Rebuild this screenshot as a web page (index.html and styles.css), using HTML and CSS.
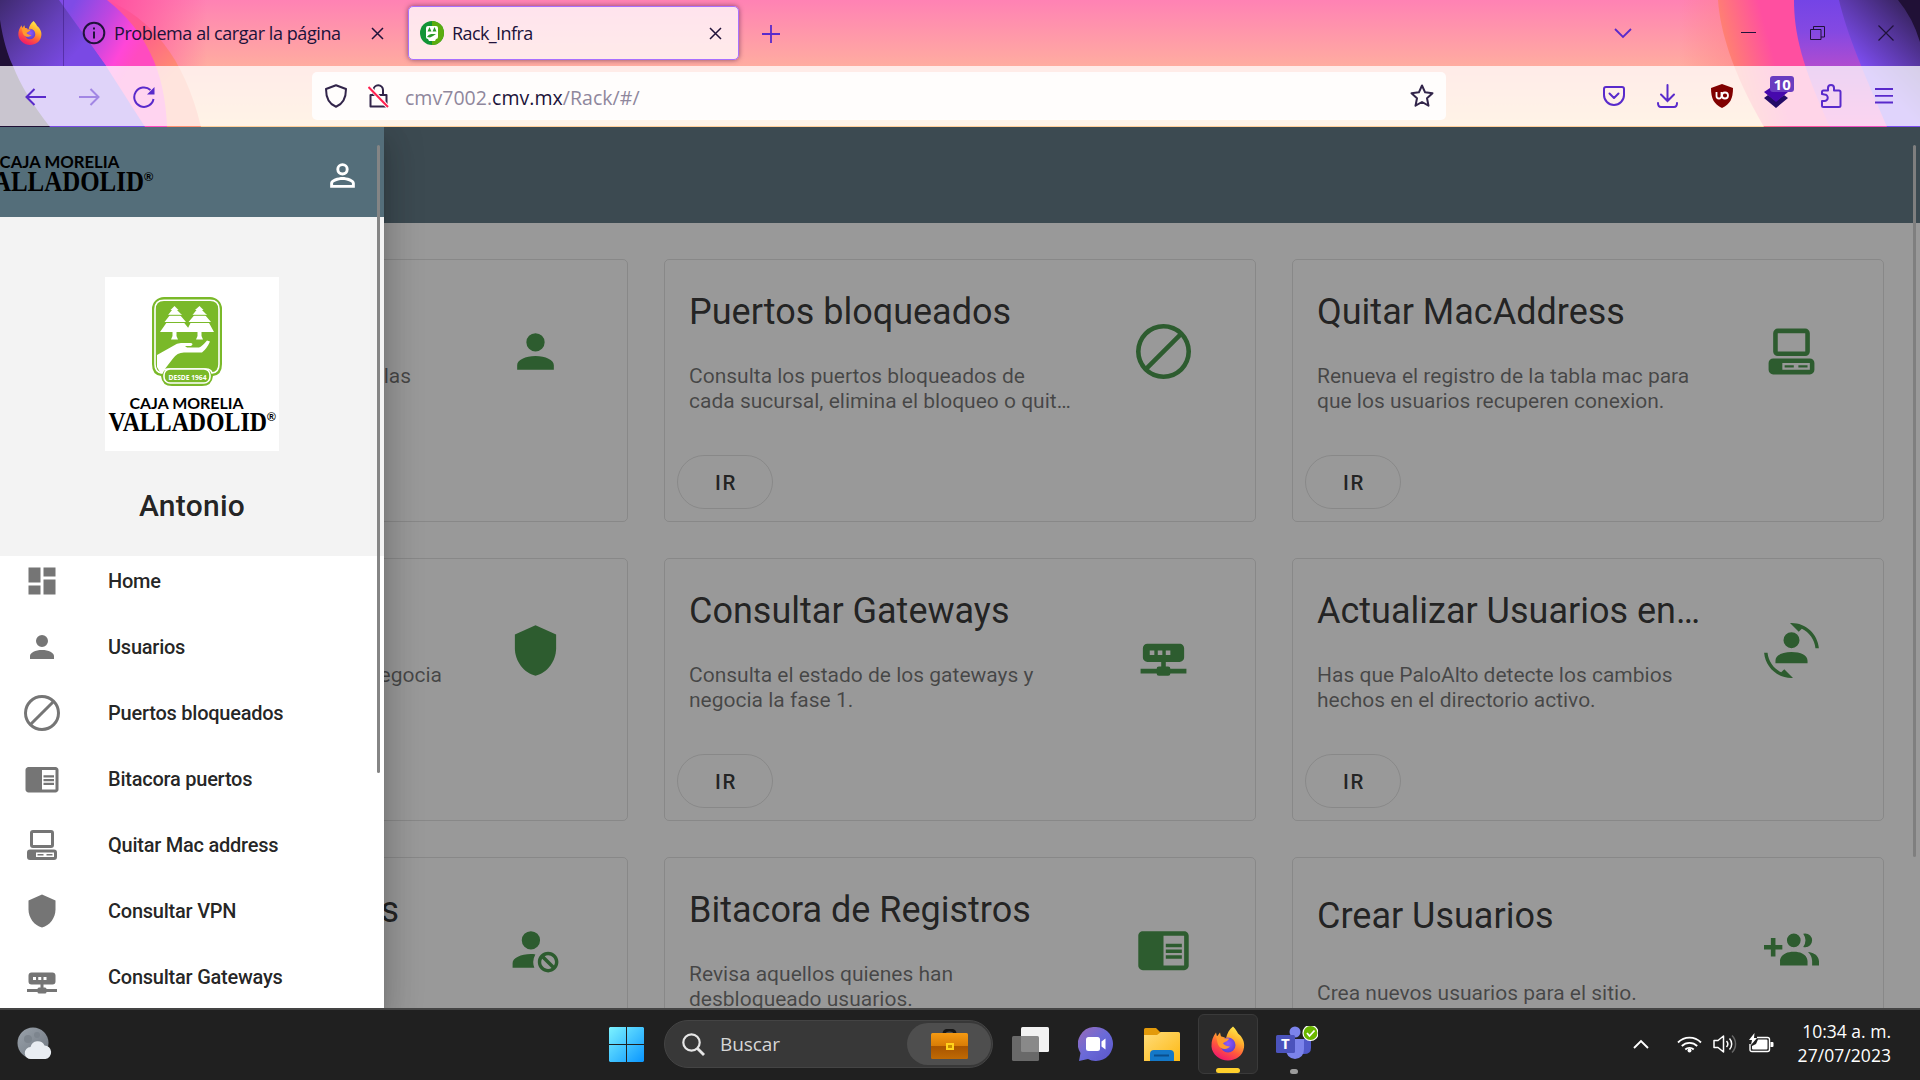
FILE: index.html
```
<!DOCTYPE html>
<html lang="es">
<head>
<meta charset="utf-8">
<title>Rack_Infra</title>
<link rel="stylesheet" href="styles.css">
</head>
<body>
<svg class="defs" width="0" height="0" aria-hidden="true">
  <defs>
    <linearGradient id="ff-body" x1=".8" y1="0" x2=".3" y2="1"><stop offset="0" stop-color="#fff14f"/><stop offset=".35" stop-color="#ffb02e"/><stop offset=".65" stop-color="#ff5a3c"/><stop offset="1" stop-color="#f0146e"/></linearGradient>
    <radialGradient id="ff-core" cx=".5" cy=".4" r=".6"><stop offset="0" stop-color="#9059ff"/><stop offset="1" stop-color="#5b3fd0"/></radialGradient>
    <linearGradient id="win" x1="0" y1="0" x2="1" y2="1"><stop offset="0" stop-color="#7df3ff"/><stop offset="1" stop-color="#0a96ff"/></linearGradient>
    <linearGradient id="case" x1="0" y1="0" x2="0" y2="1"><stop offset="0" stop-color="#f59a12"/><stop offset=".5" stop-color="#d87c06"/><stop offset=".52" stop-color="#a85400"/><stop offset="1" stop-color="#c06a04"/></linearGradient>
    <linearGradient id="folder" x1="0" y1="0" x2="1" y2="1"><stop offset="0" stop-color="#ffdc7a"/><stop offset="1" stop-color="#fdb913"/></linearGradient>
    <linearGradient id="chat" x1="0" y1="0" x2="1" y2="1"><stop offset="0" stop-color="#9a6bb8"/><stop offset=".5" stop-color="#6a6ad8"/><stop offset="1" stop-color="#5a55c8"/></linearGradient>
    <linearGradient id="moon" x1="0" y1="0" x2="1" y2="1"><stop offset="0" stop-color="#9aa2ab"/><stop offset="1" stop-color="#6f7780"/></linearGradient>
  </defs>
  <symbol id="i-firefox" viewBox="0 0 34 34">
    <path fill="url(#ff-body)" d="M22 0c3 3 4 5 5 7 4 3 7 8 6 14-1 8-8 13-16 13S1 28 .5 20C.3 14 2 10 5 6l1 4 3-4 1 4c2 0 4 1 5 2 1-5 3-9 7-12z"/>
    <circle cx="17" cy="18.500" r="7.500" fill="url(#ff-core)"/>
    <path fill="#ff9a2e" d="M5 10c3-1 6 0 8 2h5c-1 3-4 3-6 5 2 2 4 3 7 3-3 4-10 3-12-2-1-3-1-5-2-8z"/>
  </symbol>
  <symbol id="i-dashboard" viewBox="0 0 24 24"><path d="M13 3v6h8V3m-8 18h8V11h-8M3 21h8v-6H3m0-2h8V3H3z"/></symbol>
  <symbol id="i-account" viewBox="0 0 24 24"><path d="M12 4a4 4 0 0 1 4 4 4 4 0 0 1-4 4 4 4 0 0 1-4-4 4 4 0 0 1 4-4m0 10c4.420 0 8 1.790 8 4v2H4v-2c0-2.210 3.580-4 8-4z"/></symbol>
  <symbol id="i-account-outline" viewBox="0 0 24 24"><path d="M12 4A4 4 0 0 1 16 8A4 4 0 0 1 12 12A4 4 0 0 1 8 8A4 4 0 0 1 12 4M12 5.900A2.100 2.100 0 0 0 9.900 8A2.100 2.100 0 0 0 12 10.100A2.100 2.100 0 0 0 14.100 8A2.100 2.100 0 0 0 12 5.900M12 13C14.670 13 20 14.330 20 17V20H4V17C4 14.330 9.330 13 12 13M12 14.900C9.030 14.900 5.900 16.360 5.900 17V18.100H18.100V17C18.100 16.360 14.970 14.900 12 14.900Z"/></symbol>
  <symbol id="i-block" viewBox="0 0 24 24"><path d="M12 0A12 12 0 0 1 24 12A12 12 0 0 1 12 24A12 12 0 0 1 0 12A12 12 0 0 1 12 0M12 2A10 10 0 0 0 2 12C2 14.400 2.850 16.600 4.260 18.330L18.330 4.260C16.600 2.850 14.400 2 12 2M12 22A10 10 0 0 0 22 12C22 9.600 21.150 7.400 19.740 5.670L5.670 19.740C7.400 21.150 9.600 22 12 22Z"/></symbol>
  <symbol id="i-reader" viewBox="0 0 24 24"><path d="M13 12h7v1.500h-7zm0-2.500h7V11h-7zm0 5h7V16h-7zM21 4H3c-1.100 0-2 .9-2 2v13c0 1.100.9 2 2 2h18c1.100 0 2-.9 2-2V6c0-1.100-.9-2-2-2zm0 15h-9V6h9v13z"/></symbol>
  <symbol id="i-desktop" viewBox="0 0 24 24"><path fill-rule="evenodd" d="M6 2h12a2 2 0 0 1 2 2v8a2 2 0 0 1-2 2H6a2 2 0 0 1-2-2V4a2 2 0 0 1 2-2zm0 2v8h12V4zM4 15h16a2 2 0 0 1 2 2v3a2 2 0 0 1-2 2H4a2 2 0 0 1-2-2v-3a2 2 0 0 1 2-2zm4 2v3h12v-3zm1 1h4v1H9zm6 0h4v1h-4z"/></symbol>
  <symbol id="i-shield" viewBox="0 0 24 24"><path d="M12 1L3 5V11C3 16.550 6.840 21.740 12 23C17.160 21.740 21 16.550 21 11V5L12 1Z"/></symbol>
  <symbol id="i-router" viewBox="0 0 24 24"><path fill-rule="evenodd" d="M5 9C3.890 9 3 9.890 3 11V15A2 2 0 0 0 5 17H11V19H10A1 1 0 0 0 9 20H2V22H9A1 1 0 0 0 10 23H14A1 1 0 0 0 15 22H22V20H15A1 1 0 0 0 14 19H13V17H19A2 2 0 0 0 21 15V11C21 9.890 20.100 9 19 9H5M6 12H8V14H6V12M9.500 12H11.500V14H9.500V12M13 12H15V14H13V12Z"/></symbol>
  <symbol id="i-convert" viewBox="0 0 24 24"><path d="M7.500 21.500L8.850 20.160L12.660 23.970L12 24C5.710 24 .56 19.160 .05 13H1.550C1.910 16.760 4.250 19.940 7.500 21.500M16.500 2.500L15.150 3.840L11.340 .03L12 0C18.290 0 23.440 4.840 23.950 11H22.450C22.090 7.240 19.750 4.070 16.500 2.500M5 17.600V16.500C5 14 8 12.700 12 12.700S19 14 19 16.500V17.600ZM15.500 7.500A3.500 3.500 0 0 1 12 11A3.500 3.500 0 0 1 8.500 7.500A3.500 3.500 0 0 1 12 4A3.500 3.500 0 0 1 15.500 7.500Z"/></symbol>
  <symbol id="i-account-cancel" viewBox="0 0 24 24"><path d="M10 4A4 4 0 0 0 6 8A4 4 0 0 0 10 12A4 4 0 0 0 14 8A4 4 0 0 0 10 4M17.500 13C15 13 13 15 13 17.500C13 20 15 22 17.500 22C20 22 22 20 22 17.500C22 15 20 13 17.500 13M10 14C5.580 14 2 15.790 2 18V20H11.500A6.500 6.500 0 0 1 11 17.500A6.500 6.500 0 0 1 11.950 14.140C11.320 14.060 10.680 14 10 14M17.500 14.500C19.160 14.500 20.500 15.840 20.500 17.500C20.500 18.060 20.350 18.580 20.080 19L16 14.920C16.420 14.650 16.940 14.500 17.500 14.500M14.920 16L19 20.080C18.580 20.350 18.060 20.500 17.500 20.500C15.840 20.500 14.500 19.160 14.500 17.500C14.500 16.940 14.650 16.420 14.920 16Z"/></symbol>
  <symbol id="i-account-plus" viewBox="0 0 24 24"><path d="M19 17V19H7V17S7 13 13 13 19 17 19 17M16 8A3 3 0 1 0 13 11A3 3 0 0 0 16 8M19.200 13.060A5.600 5.600 0 0 1 21 17V19H24V17S24 13.550 19.200 13.060M18 5A2.910 2.910 0 0 0 17.110 5.140A5 5 0 0 1 17.110 10.860A2.910 2.910 0 0 0 18 11A3 3 0 0 0 18 5M8 10H5V7H3V10H0V12H3V15H5V12H8Z"/></symbol>
</svg>

<div class="screen">
  <header class="browser">
    <svg class="theme" viewBox="0 0 1920 127" width="1920" height="127" aria-hidden="true">
      <defs>
        <linearGradient id="t-bg" x1="0" y1="0" x2="0" y2="1"><stop offset="0" stop-color="#ff82b4"/><stop offset=".52" stop-color="#ffaca0"/><stop offset="1" stop-color="#ffcf9a"/></linearGradient>
        <linearGradient id="t-glow" x1="0" x2="1"><stop offset="0" stop-color="#ff4f9f"/><stop offset="1" stop-color="#ff4f9f" stop-opacity="0"/></linearGradient>
        <linearGradient id="t-orange" gradientUnits="userSpaceOnUse" x1="120" y1="0" x2="185" y2="66"><stop offset="0" stop-color="#ff4f9f"/><stop offset=".4" stop-color="#ff5c8c"/><stop offset="1" stop-color="#ff9070"/></linearGradient>
        <linearGradient id="t-magenta" gradientUnits="userSpaceOnUse" x1="70" y1="10" x2="140" y2="50"><stop offset="0" stop-color="#7f4be6"/><stop offset=".45" stop-color="#c046e0"/><stop offset=".8" stop-color="#ff46d8"/><stop offset="1" stop-color="#ff4bc0"/></linearGradient>
        <linearGradient id="t-violet" gradientUnits="userSpaceOnUse" x1="0" y1="0" x2="70" y2="60"><stop offset="0" stop-color="#3f2a70"/><stop offset=".6" stop-color="#6540ba"/><stop offset="1" stop-color="#7a49e4"/></linearGradient>
        <linearGradient id="t-pink2" gradientUnits="userSpaceOnUse" x1="1725" y1="40" x2="1780" y2="25"><stop offset="0" stop-color="#ff8072"/><stop offset=".75" stop-color="#ff4fa0"/></linearGradient>
        <linearGradient id="t-purple2" x1="0" y1="0" x2="0" y2="1"><stop offset="0" stop-color="#7444e6"/><stop offset=".25" stop-color="#8449e2"/><stop offset=".55" stop-color="#b44cce"/><stop offset="1" stop-color="#f04cc0"/></linearGradient>
        <linearGradient id="t-violet2" gradientUnits="userSpaceOnUse" x1="1855" y1="60" x2="1905" y2="10"><stop offset="0" stop-color="#7d4df0"/><stop offset="1" stop-color="#3c2668"/></linearGradient>
        <linearGradient id="t-og" x1="0" x2="1"><stop offset="0" stop-color="#ff7f7a" stop-opacity="0"/><stop offset="1" stop-color="#ff7f8a" stop-opacity=".55"/></linearGradient>
      </defs>
      <rect width="1920" height="127" fill="url(#t-bg)"/>
      <rect x="107" width="100" height="66" fill="url(#t-glow)"/>
      <path fill="url(#t-orange)" d="M107 0C150 18 184 56 201 127H0V0z"/>
      <path fill="url(#t-magenta)" d="M107 0C145 30 165 70 167 127H0V0z"/>
      <path fill="#7a49e4" d="M59 0L106 66 145 127H0V0z"/>
      <path fill="url(#t-violet)" d="M0 0H59L106 66H0z"/>
      <path fill="#201036" d="M0 20C3 40 8 56 13 66 20 84 32 104 50 127H0z"/>
      <rect x="1680" width="60" height="66" fill="url(#t-og)"/>
      <path fill="url(#t-pink2)" d="M1718 0C1720 30 1732 72 1764 127H1920V0z"/>
      <path fill="url(#t-purple2)" d="M1794 0C1794 34 1802 66 1830 127H1920V0z"/>
      <path fill="url(#t-violet2)" d="M1839 0C1846 30 1858 60 1887 127H1920V0z"/>
      <path fill="#201036" d="M1898 0Q1913 18 1920 42V0z"/>
    </svg>

    <div class="tabs">
      <svg class="tab-firefox" width="24" height="24"><use href="#i-firefox"/></svg>
      <div class="tab tab-error">
        <svg width="24" height="24" viewBox="0 0 24 24" fill="none" stroke="#20123a" stroke-width="2"><circle cx="12" cy="12" r="10.300"/><path d="M12 10.500v7M12 6.500v2"/></svg>
        <span class="tab-title tab-title-error">Problema al cargar la página</span>
        <svg class="tab-close" width="13" height="13" viewBox="0 0 13 13" stroke="#20123a" stroke-width="1.500"><path d="M1 1l11 11M12 1L1 12"/></svg>
      </div>
      <div class="tab tab-active">
        <svg width="24" height="24" viewBox="0 0 24 24"><circle cx="12" cy="12" r="12" fill="#129436"/><path d="M12 0a12 12 0 0 1 0 24z" fill="#5bac10"/><path d="M8 5h8q2 0 2 2v9q0 2-2 2l-1 2H9l-1-2q-2 0-2-2V7q0-2 2-2z" fill="#fff"/><path d="M9.500 6l-2 4.500h4zM14.500 6l-2 4.500h4zM7 16c2-3 4-3 5-3h4l-3 2-3 1.500z" fill="#2b9a2a"/></svg>
        <span class="tab-title tab-title-active">Rack_Infra</span>
        <svg class="tab-close" width="13" height="13" viewBox="0 0 13 13" stroke="#20123a" stroke-width="1.500"><path d="M1 1l11 11M12 1L1 12"/></svg>
      </div>
      <svg class="tab-new" width="18" height="18" viewBox="0 0 18 18" stroke="#592acb" stroke-width="1.800"><path d="M9 0v18M0 9h18"/></svg>
      <div class="window-controls">
        <svg width="18" height="11" viewBox="0 0 18 11" fill="none" stroke="#592acb" stroke-width="1.800"><path d="M1 1l8 8 8-8"/></svg>
        <svg class="wc-min" width="15" height="14" viewBox="0 0 15 14" stroke="#20123a"><path d="M0 6.500h15"/></svg>
        <svg class="wc-max" width="15" height="14" viewBox="0 0 15 14" fill="none" stroke="#20123a"><path d="M.5 3.500h10.500v10H.5zM3.500 3.500v-3h11v10.500H11"/></svg>
        <svg class="wc-close" width="16" height="16" viewBox="0 0 16 16" stroke="#20123a" stroke-width="1.200"><path d="M.5 .5l15 15M15.500 .5l-15 15"/></svg>
      </div>
    </div>

    <div class="toolbar">
      <div class="nav-buttons">
        <svg width="21" height="18" viewBox="0 0 21 18" fill="none" stroke="#592acb" stroke-width="2"><path d="M21 9H1.500M9.500 1L1.500 9l8 8"/></svg>
        <svg class="forward" width="21" height="18" viewBox="0 0 21 18" fill="none" stroke="#592acb" stroke-width="2"><path d="M0 9h19.500M11.500 1l8 8-8 8"/></svg>
        <svg width="22" height="22" viewBox="0 0 22 22" fill="none" stroke="#592acb" stroke-width="2"><path d="M20.500 13A9.700 9.700 0 1 1 17.500 4"/><path d="M21.500 1v7.500h-7.500z" fill="#592acb" stroke="none"/></svg>
      </div>
      <div class="urlbar">
        <svg width="22" height="24" viewBox="0 0 22 24" fill="none" stroke="#32254a" stroke-width="2" stroke-linejoin="round"><path d="M11 1.200L21 5C21 14 18 20 11 22.800 4 20 1 14 1 5z"/></svg>
        <svg class="lock" width="21" height="24" viewBox="0 0 21 24" fill="none" stroke="#32254a" stroke-width="2"><path d="M5.500 11V6a4.500 4.500 0 0 1 9.500 0v5M2.500 11h16v11.500h-16z" stroke-linejoin="round"/><path d="M1 3l19 20" stroke="#fffcfb" stroke-width="4"/><path d="M.5 3l19.500 20" stroke="#ff1f4f"/></svg>
        <span class="url">cmv7002.<b>cmv.mx</b>/Rack/#/</span>
        <svg class="star" width="24" height="24" viewBox="0 0 24 24" fill="none" stroke="#32254a" stroke-width="2" stroke-linejoin="round"><path d="M12 1.500l3.100 6.800 7.400.9-5.500 5 1.500 7.500L12 18l-6.500 3.700L7 14.200l-5.500-5 7.400-.9z"/></svg>
      </div>
      <div class="ext">
        <svg width="22" height="20" viewBox="0 0 22 20" fill="none" stroke="#592acb" stroke-width="2" stroke-linecap="round" stroke-linejoin="round"><path d="M3 1h16q2 0 2 2v6a10 10 0 0 1-20 0V3q0-2 2-2zM6.500 7.500L11 12l4.500-4.500"/></svg>
        <svg width="21" height="24" viewBox="0 0 21 24" fill="none" stroke="#592acb" stroke-width="2" stroke-linecap="round"><path d="M10.500 1v16M4 10.500l6.500 6.500 6.500-6.500M1 19q0 4 3 4h13q3 0 3-4"/></svg>
        <svg width="22" height="24" viewBox="0 0 22 24"><path fill="#800000" d="M11 0l11 4c0 11-3 16-11 20C3 20 0 15 0 4z"/><path d="M5.500 8v4a2.500 2.500 0 0 0 5 0V8" fill="none" stroke="#fff" stroke-width="1.800"/><circle cx="14" cy="11.500" r="3" fill="none" stroke="#fff" stroke-width="1.800"/></svg>
        <div class="wappalyzer">
          <svg width="24" height="24" viewBox="0 0 24 24"><path fill="#230b66" d="M0 14l4-3 8 6 8-6 4 3-12 10z"/><path fill="#4608ad" d="M0 8l12-8 12 8-12 10z"/></svg>
          <span class="badge">10</span>
        </div>
        <svg class="puzzle" width="21" height="24" viewBox="0 0 21 24" fill="none" stroke="#592acb" stroke-width="2" stroke-linejoin="round"><path d="M1 10V8q0-1.500 1.500-1.500h4.500V4a3 3 0 0 1 6 0v2.500h5q1.500 0 1.500 1.500v13.500q0 1.500-1.500 1.500h-15.500q-1.500 0-1.500-1.500v-4.500h2.500a3 3 0 0 0 0-6.500z"/></svg>
        <svg width="18" height="16" viewBox="0 0 18 16" stroke="#592acb" stroke-width="1.800"><path d="M0 1h18M0 7.800h18M0 14.500h18"/></svg>
      </div>
    </div>
  </header>

  <main class="page">
    <div class="app-bar"></div>
    <div class="cards">
      <article class="card">
        <div class="card-body"><div class="card-text partial-a"><h2>Usuarios</h2><p>las</p></div><svg class="card-icon"><use href="#i-account"/></svg></div>
        <button class="go">IR</button>
      </article>
      <article class="card">
        <div class="card-body"><div class="card-text"><h2>Puertos bloqueados</h2><p>Consulta los puertos bloqueados de<br>cada sucursal, elimina el bloqueo o quit…</p></div><svg class="card-icon"><use href="#i-block"/></svg></div>
        <button class="go">IR</button>
      </article>
      <article class="card">
        <div class="card-body"><div class="card-text"><h2>Quitar MacAddress</h2><p>Renueva el registro de la tabla mac para<br>que los usuarios recuperen conexion.</p></div><svg class="card-icon"><use href="#i-desktop"/></svg></div>
        <button class="go">IR</button>
      </article>
      <article class="card">
        <div class="card-body"><div class="card-text partial-b"><h2>Consultar VPN</h2><p>negocia</p></div><svg class="card-icon"><use href="#i-shield"/></svg></div>
        <button class="go">IR</button>
      </article>
      <article class="card">
        <div class="card-body"><div class="card-text"><h2>Consultar Gateways</h2><p>Consulta el estado de los gateways y<br>negocia la fase 1.</p></div><svg class="card-icon"><use href="#i-router"/></svg></div>
        <button class="go">IR</button>
      </article>
      <article class="card">
        <div class="card-body"><div class="card-text"><h2>Actualizar Usuarios en…</h2><p>Has que PaloAlto detecte los cambios<br>hechos en el directorio activo.</p></div><svg class="card-icon"><use href="#i-convert"/></svg></div>
        <button class="go">IR</button>
      </article>
      <article class="card">
        <div class="card-body"><div class="card-text partial-c"><h2>Usuarios</h2></div><svg class="card-icon"><use href="#i-account-cancel"/></svg></div>
        <button class="go">IR</button>
      </article>
      <article class="card">
        <div class="card-body"><div class="card-text"><h2>Bitacora de Registros</h2><p>Revisa aquellos quienes han<br>desbloqueado usuarios.</p></div><svg class="card-icon"><use href="#i-reader"/></svg></div>
        <button class="go">IR</button>
      </article>
      <article class="card">
        <div class="card-body"><div class="card-text single"><h2>Crear Usuarios</h2><p>Crea nuevos usuarios para el sitio.</p></div><svg class="card-icon"><use href="#i-account-plus"/></svg></div>
        <button class="go">IR</button>
      </article>
    </div>
    <div class="page-thumb"></div>
    <div class="scrim"></div>

    <aside class="drawer">
      <div class="drawer-bar">
        <svg class="bar-wordmark" width="183" height="46" viewBox="0 0 174 44">
          <text class="wm-top" x="24" y="14.500" textLength="114.500" lengthAdjust="spacingAndGlyphs">CAJA MORELIA</text>
          <text class="wm-main" x="3.500" y="36.500" textLength="158.500" lengthAdjust="spacingAndGlyphs">VALLADOLID</text>
          <text class="wm-reg" x="162" y="26.500">®</text>
        </svg>
        <svg class="bar-user" width="37" height="37"><use href="#i-account-outline"/></svg>
      </div>
      <div class="profile">
        <div class="logo">
          <svg class="emblem" width="70" height="89" viewBox="0 0 70 89">
            <path fill="#7ab929" d="M12 0h46a12 12 0 0 1 12 12v55q0 11-9 12-1 10-11 10H20q-10 0-11-10-9-1-9-12V12A12 12 0 0 1 12 0z"/>
            <path fill="none" stroke="#fff" stroke-width="1.600" d="M12 3.200h46q9 0 9 9v55q0 8-7 8.800-1-4-6-4H16q-5 0-6 4-7-.8-7-8.800v-55q0-9 9-9z"/>
            <rect x="12" y="72" width="46" height="14" rx="6" fill="#7ab929" stroke="#fff" stroke-width="1.600"/>
            <path fill="#fff" d="M22.500 9l4 4h-1.500l5 5h-2l6 7h-2.500l8 10H24.500v4l1.500 3.500h-7l1.500-3.500v-4H8l7-10h-2.500l5.500-7h-2l4-5h-1.500z"/>
            <path fill="#fff" d="M47.500 9l4 4H50l5 5h-2l6 7h-2.500l5.500 10H49.500v4l1.500 3.500h-7l1.500-3.500v-4H34l5-10h-2.500l6-7h-2l4-5h-1.500z"/>
            <path stroke="#7ab929" d="M16 18.300h13M12 25.500h21M41 18.300h13M37 25.500h21"/>
            <path fill="#fff" d="M5 58l16-9q4-3 8-3h10q3 1 0 3h-6l2 1.500h12q3-1 8-7l3 1q-3 7-8 11H32q-7 0-11 6L9 77 5 70z"/>
            <text class="since" x="16.500" y="82.500" textLength="38" lengthAdjust="spacingAndGlyphs">DESDE 1964</text>
          </svg>
          <svg width="174" height="44" viewBox="0 0 174 44">
            <text class="wm-top" x="24.500" y="14.500" textLength="114" lengthAdjust="spacingAndGlyphs">CAJA MORELIA</text>
            <text class="wm-main" x="3.500" y="36.500" textLength="158.500" lengthAdjust="spacingAndGlyphs">VALLADOLID</text>
            <text class="wm-reg" x="162" y="26.500">®</text>
          </svg>
        </div>
        <div class="name">Antonio</div>
      </div>
      <nav class="menu">
        <a><svg><use href="#i-dashboard"/></svg>Home</a>
        <a><svg><use href="#i-account"/></svg>Usuarios</a>
        <a><svg><use href="#i-block"/></svg>Puertos bloqueados</a>
        <a><svg><use href="#i-reader"/></svg>Bitacora puertos</a>
        <a><svg><use href="#i-desktop"/></svg>Quitar Mac address</a>
        <a><svg><use href="#i-shield"/></svg>Consultar VPN</a>
        <a><svg><use href="#i-router"/></svg>Consultar Gateways</a>
      </nav>
      <div class="drawer-thumb"></div>
    </aside>
  </main>

  <footer class="taskbar">
    <svg class="weather" width="36" height="34" viewBox="0 0 36 34"><circle cx="16" cy="16" r="15.500" fill="url(#moon)"/><circle cx="11" cy="12" r="4" fill="#7d858e"/><circle cx="20" cy="8" r="3" fill="#7d858e"/><path fill="#e9edf2" d="M14 32a6 6 0 0 1-.5-12 7.500 7.500 0 0 1 14-1.500A6.800 6.800 0 0 1 28.500 32z"/></svg>
    <div class="apps">
      <svg width="35" height="35" viewBox="0 0 35 35"><path fill="url(#win)" d="M1 0h16v17H0V1zM18 0h16l1 1v16H18zM0 18h17v17H1l-1-1zM18 18h17v16l-1 1H18z"/></svg>
      <div class="search">
        <svg width="23" height="23" viewBox="0 0 23 23" fill="none" stroke="#e6e6e6"><circle cx="9.500" cy="9.500" r="8.200" stroke-width="2.200"/><path d="M15.500 15.500l6.500 6.500" stroke-width="2.800"/></svg>
        <span>Buscar</span>
        <div class="highlight"><svg width="37" height="30" viewBox="0 0 37 30"><path d="M13 5q0-4 5.500-4T24 5" fill="none" stroke="#161616" stroke-width="3"/><rect y="4" width="37" height="26" rx="1.500" fill="url(#case)"/><rect x="15" y="14" width="8" height="7" fill="#ffd21c"/><rect x="17" y="16" width="4" height="3" fill="#c88a00"/></svg></div>
      </div>
      <svg class="a-task" width="37" height="34" viewBox="0 0 37 34"><rect x="9" width="28" height="25" rx="1.500" fill="#f2f2f2"/><rect y="9" width="27" height="25" rx="1.500" fill="#777" fill-opacity=".85"/></svg>
      <svg class="a-chat" width="35" height="34" viewBox="0 0 35 34"><path fill="url(#chat)" d="M18 0a17 17 0 1 1-8 32l-9 2 1.500-8A17 17 0 0 1 18 0z"/><rect x="8" y="10" width="14" height="14" rx="2.500" fill="#fff"/><path d="M23.500 14.500l4-3v11l-4-3z" fill="#fff"/></svg>
      <svg class="a-folder" width="36" height="33" viewBox="0 0 36 33"><path fill="#e39a0a" d="M0 1.500Q0 0 1.500 0H12l4 4h18v10H0z"/><path fill="url(#folder)" d="M0 7h13l4-3h17.500Q36 4 36 5.500V33H0z"/><path fill="#1478c8" d="M6 33v-7q0-4 4-4h16q4 0 4 4v7z"/><path d="M10 27.500h15" stroke="#0a4e8c" stroke-width="2"/></svg>
      <div class="tile"><svg width="34" height="35"><use href="#i-firefox"/></svg><i></i></div>
      <div class="teams"><svg width="42" height="34" viewBox="0 0 42 34"><circle cx="19" cy="6" r="5.500" fill="#7b83eb"/><path fill="#5059c9" d="M25 13h10v9q0 6-7 6h-3z"/><path fill="#7b83eb" d="M10 13h18v10q0 9-9 10-9-1-9-10z"/><rect y="9" width="19" height="18" rx="1.500" fill="#4b53bc"/><text class="teams-t" x="5" y="23">T</text><circle cx="34.500" cy="7" r="7.500" fill="#6bb700" stroke="#fff" stroke-width="1.200"/><path d="M31 7l2.500 3 5-5.500" fill="none" stroke="#fff" stroke-width="1.800"/></svg><i></i></div>
    </div>
    <div class="tray">
      <svg class="t-up" width="16" height="10" viewBox="0 0 16 10" fill="none" stroke="#fff" stroke-width="1.900"><path d="M1 9l7-7 7 7"/></svg>
      <svg class="t-wifi" width="25" height="18" viewBox="0 0 25 18" fill="none" stroke="#fff" stroke-width="1.800"><path d="M1 7.500a16 16 0 0 1 23 0M4.800 11a11 11 0 0 1 15.400 0M8.300 14.500a6 6 0 0 1 8.400 0"/><circle cx="12.500" cy="15.500" r="2" fill="#fff" stroke="none"/></svg>
      <svg class="t-vol" width="25" height="20" viewBox="0 0 25 20" fill="none" stroke="#fff" stroke-width="1.500" stroke-linejoin="round"><path d="M1 6.500h4L10.500 2v16L5 13.500H1zM13.500 7a4.500 4.500 0 0 1 0 6M16.500 4.500a8 8 0 0 1 0 11"/><path d="M19 1.500a12 12 0 0 1 0 17" stroke="#666"/></svg>
      <svg class="t-bat" width="25" height="20" viewBox="0 0 25 20"><path fill="none" stroke="#fff" stroke-width="1.400" d="M8 4.500h10.500q2 0 2 2v10q0 2-2 2H3q-2 0-2-2V11"/><path fill="#fff" d="M9 6.500h8.500q1 0 1 1v8q0 1-1 1H4q-1 0-1-1V13l4-2zM21.500 9h2q1 0 1 1v3q0 1-1 1h-2zM5.500 0L0 7h3l-1 5 6-7H5z"/></svg>
      <div class="clock"><span class="time">10:34 a. m.</span><span class="date">27/07/2023</span></div>
    </div>
  </footer>
</div>
</body>
</html>
```
FILE: styles.css
```
* { box-sizing: border-box; }
body { margin: 0; background: #202020; font-family: Roboto, sans-serif; }
svg { display: block; flex: none; }
.defs { position: absolute; }
.screen { width: 1920px; height: 1080px; overflow: hidden; display: flex; flex-direction: column; }

/* browser chrome */
.browser { position: relative; height: 127px; flex: none; font-family: "Open Sans", "Noto Sans", sans-serif; color: #20123a; }
.theme { position: absolute; inset: 0; }
.tabs { position: relative; height: 66px; display: flex; align-items: center; padding-left: 18px; }
.tab-firefox { margin-right: 21px; }
.tab { display: flex; align-items: center; gap: 8px; height: 54px; }
.tab-error { width: 345px; height: 66px; border-left: 1px solid rgba(50, 20, 110, .45); padding: 0 24px 0 18px; }
.tab-active { width: 331px; padding: 0 16px 0 11px; border: 1px solid #a970ff; border-radius: 5px; background: rgba(255, 255, 255, .77); box-shadow: 0 0 5px rgba(60, 20, 60, .6); }
.tab-title { font-size: 18px; white-space: nowrap; }
.tab-title-error { letter-spacing: -.43px; }
.tab-title-active { letter-spacing: -.6px; }
.tab-close { margin-left: auto; }
.tab-new { margin-left: 23px; margin-top: 2px; }
.window-controls { margin-left: auto; display: flex; align-items: center; padding-right: 26px; }
.wc-min { margin-left: 109px; }
.wc-max { margin-left: 54px; }
.wc-close { margin-left: 53px; }
.toolbar { position: relative; height: 60px; display: flex; align-items: center; background: rgba(255, 255, 255, .76); }
.nav-buttons { width: 312px; display: flex; align-items: center; gap: 33px; padding: 2px 0 0 25px; }
.forward { opacity: .45; }
.urlbar { width: 1134px; height: 48px; border-radius: 5px; background: rgba(255, 255, 255, .85); display: flex; align-items: center; padding: 0 12px 0 13px; }
.lock { margin-left: 21px; }
.url { margin-left: 16px; padding-top: 2px; font-size: 19.500px; letter-spacing: .03px; color: #8f879c; white-space: nowrap; }
.url b { font-weight: 400; color: #20123a; }
.star { margin-left: auto; }
.ext { flex: 1; display: flex; align-items: center; justify-content: space-between; padding: 0 27px 0 157px; }
.wappalyzer { position: relative; margin-left: -1px; }
.puzzle { margin-right: 1px; }
.badge { position: absolute; left: 6px; top: -8px; width: 24px; height: 16px; border-radius: 3px; background: #6a3cc0; color: #fff; font: 700 15px/16px "Open Sans", sans-serif; text-align: center; }

/* web page */
.page { position: relative; height: 881px; flex: none; overflow: hidden; background: #fff; }
.app-bar { height: 96px; background: #546e7a; }
.cards { display: grid; grid-template-columns: repeat(3, 592px); grid-auto-rows: 263px; gap: 36px; padding: 36px; }
.card { border: 1px solid rgba(0, 0, 0, .12); border-radius: 5px; }
.card-body { display: flex; justify-content: space-between; height: 195px; padding: 32px 64px 0 24px; }
.card-text { white-space: nowrap; }
.card h2 { margin: 0; font-size: 36px; line-height: 40px; font-weight: 400; color: rgba(0, 0, 0, .87); }
.card p { margin: 32px 0 0; font-size: 21px; line-height: 25px; color: rgba(0, 0, 0, .6); }
.card .single h2 { padding-top: 6px; }
.card .single p { margin-top: 45px; }
.partial-a { width: 350px; }
.partial-b { width: 381px; }
.partial-a p, .partial-b p { text-align: right; }
.partial-c { width: 338px; text-align: right; }
.card-icon { width: 55px; height: 55px; margin-top: 32px; fill: #388e3c; }
.go { margin-left: 12px; width: 96px; height: 54px; border: 1px solid rgba(0, 0, 0, .12); border-radius: 27px; background: none; font: 500 20.500px Roboto, sans-serif; letter-spacing: 1.600px; color: rgba(0, 0, 0, .87); padding: 1px 0 0 2px; }
.page-thumb { position: absolute; right: 4px; top: 18px; width: 3px; height: 712px; border-radius: 2px; background: #d0d0d0; }
.scrim { position: absolute; inset: 0; background: rgba(33, 33, 33, .46); }

/* navigation drawer */
.drawer { position: absolute; left: 0; top: 0; width: 384px; height: 881px; background: #fff; overflow: visible; box-shadow: 0 10px 12px -6px rgba(0, 0, 0, .2), 0 20px 30px 2px rgba(0, 0, 0, .14), 0 7px 37px 6px rgba(0, 0, 0, .12); }
.drawer-bar { height: 90px; background: #546e7a; display: flex; align-items: center; justify-content: space-between; overflow: hidden; padding-right: 23px; }
.bar-wordmark { margin-left: -26px; margin-top: 8px; }
.bar-user { fill: #fff; margin-top: 6px; }
.wm-top { font: 700 15.500px Lato, sans-serif; }
.wm-main { font: 700 28px "Liberation Serif", serif; }
.wm-reg { font: 700 12px "Liberation Sans", sans-serif; }
.profile { height: 339px; background: #f3f3f3; display: flex; flex-direction: column; align-items: center; padding-top: 60px; }
.logo { width: 174px; height: 174px; background: #fff; display: flex; flex-direction: column; padding-top: 20px; }
.emblem { margin-left: 47px; margin-bottom: 8px; }
.since { font: 700 7px "Open Sans", sans-serif; fill: #fff; }
.name { margin-top: 35px; font-size: 30px; line-height: 40px; font-weight: 500; letter-spacing: .25px; color: rgba(0, 0, 0, .87); }
.menu { display: flex; flex-direction: column; margin-top: -8px; }
.menu a { height: 66px; display: flex; align-items: center; gap: 48px; padding-left: 24px; font-size: 20px; letter-spacing: -.24px; font-weight: 500; color: rgba(0, 0, 0, .87); }
.menu svg { width: 36px; height: 36px; fill: #757575; }
.drawer-thumb { position: absolute; right: 4px; top: 18px; width: 3px; height: 628px; border-radius: 2px; background: #858585; }

/* taskbar */
.taskbar { height: 72px; flex: none; background: #202020; border-top: 2px solid #444; display: flex; padding-left: 17px; color: #fff; font-family: "Open Sans", "Noto Sans", sans-serif; }
.weather { margin-top: 17px; }
.apps { margin-left: 556px; display: flex; align-items: center; height: 68px; }
.search { margin-left: 20px; width: 329px; height: 48px; border-radius: 24px; border: 1px solid #444; background: #383838; display: flex; align-items: center; padding: 0 1px 0 17px; font-size: 19px; color: #d6d6d6; }
.search span { margin-left: 15px; letter-spacing: -.1px; }
.highlight { margin-left: auto; width: 84px; height: 42px; border-radius: 21px; background: #4e4e4e; display: flex; align-items: center; justify-content: center; }
.a-task { margin-left: 19px; }
.a-chat { margin-left: 29px; }
.a-folder { margin-left: 31px; }
.tile { margin-left: 18px; width: 60px; height: 60px; border: 1px solid #3a3a3a; border-radius: 6px; background: #2b2b2b; display: flex; flex-direction: column; align-items: center; justify-content: space-between; padding-top: 11px; }
.tile i { width: 24px; height: 5px; border-radius: 3px; background: #ffd02c; }
.teams { margin-left: 18px; width: 42px; height: 60px; display: flex; flex-direction: column; align-items: center; justify-content: space-between; padding-top: 12px; }
.teams i { width: 8px; height: 5px; margin-right: 6px; border-radius: 3px; background: #9b9b9b; }
.teams-t { font: 700 15px "Open Sans", sans-serif; fill: #fff; }
.tray { margin-left: auto; padding-right: 29px; display: flex; align-items: center; height: 68px; }
.t-wifi { margin-left: 28px; }
.t-vol { margin-left: 11px; }
.t-bat { margin-left: 11px; margin-top: -2px; }
.clock { width: 117px; display: flex; flex-direction: column; align-items: flex-end; padding-bottom: 2px; font-size: 17.500px; line-height: 24px; white-space: nowrap; }
.date { letter-spacing: .05px; }
```
